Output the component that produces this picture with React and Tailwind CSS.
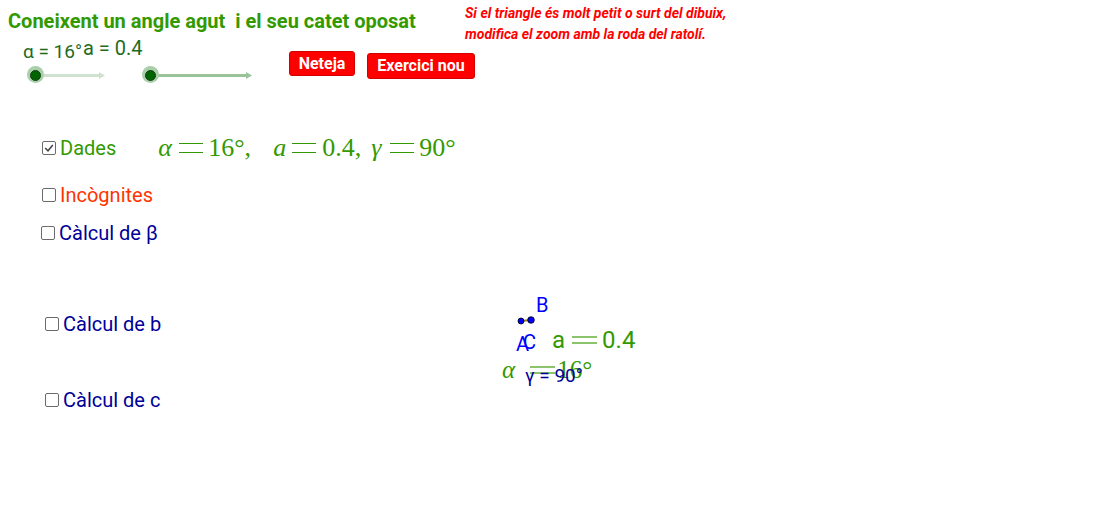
import React from "react";

const roboto = { fontFamily: "Roboto, 'Liberation Sans', sans-serif" };
const serif = { fontFamily: "'Liberation Serif', 'DejaVu Serif', serif" };

function Box({ checked }) {
  return (
    <span className="inline-flex items-center justify-center w-[14px] h-[14px] border border-[#6b6b6b] rounded-[2px] bg-white mr-[4px] shrink-0">
      {checked && (
        <svg width="12" height="12" viewBox="0 0 12 12">
          <path d="M2.2 6 L5 8.8 L9.8 3" fill="none" stroke="#444" strokeWidth="1.5" />
        </svg>
      )}
    </span>
  );
}

function Option({ checked, color, label, className = "" }) {
  return (
    <div className={`flex items-center text-[20px] leading-none ${color} ${className}`}>
      <Box checked={checked} />
      <span>{label}</span>
    </div>
  );
}

/* a typeset "=" sign drawn as two rules */
function Eq({ className = "" }) {
  return <span className={`inline-block w-[24px] h-[10px] border-y-[1.5px] border-current ${className}`} />;
}

function Slider({ w, light, className = "" }) {
  const line = light ? "bg-[#cfe2cf]" : "bg-[#99c499]";
  const fill = light ? "fill-[#cfe2cf]" : "fill-[#99c499]";
  return (
    <div className={`relative h-[12px] ${className}`} style={{ width: w }}>
      <div className={`absolute left-[4px] right-[2px] top-[5px] h-[3px] ${line}`} />
      <svg className="absolute right-[-2px] top-[3px]" width="6" height="7" viewBox="0 0 6 7">
        <path d="M0 0 L6 3.5 L0 7 Z" className={fill} />
      </svg>
      <div className="absolute left-[-8px] top-[-3px] w-[17px] h-[17px] rounded-full bg-[#a9cfa9]" />
      <div className="absolute left-[-5px] top-[1px] w-[11px] h-[11px] rounded-full bg-[#006400] border border-[#1a3d1a]" />
    </div>
  );
}

export default function App() {
  return (
    <div className="relative w-[1098px] h-[510px] bg-white overflow-hidden" style={roboto}>
      {/* header */}
      <div className="absolute left-[8px] top-[11px] text-[20px] font-bold text-[#339900] whitespace-pre leading-none">
        Coneixent un angle agut  i el seu catet oposat
      </div>

      <div className="absolute left-[465px] top-[3px] text-[14px] font-bold italic text-[#ff0000] leading-[21px]">
        <div>Si el triangle és molt petit o surt del dibuix,</div>
        <div>modifica el zoom amb la roda del ratolí.</div>
      </div>

      <div className="absolute left-[23px] top-[42px] text-[19px] text-[#1e6b1e] leading-none">α = 16°</div>
      <div className="absolute left-[83px] top-[38px] text-[20px] text-[#1e6b1e] leading-none">a = 0.4</div>

      <div className="absolute left-[35px] top-[69px] flex">
        <Slider w={68} light />
        <Slider w={100} className="ml-[47px]" />
      </div>

      <div className="absolute left-[289px] top-[51px] flex gap-[12px] items-start">
        <button className="w-[66px] h-[25px] bg-[#ff0000] border border-[#d40000] rounded-[3px] text-white font-bold text-[16px] leading-none">
          Neteja
        </button>
        <button className="mt-[2px] w-[108px] h-[26px] bg-[#ff0000] border border-[#d40000] rounded-[3px] text-white font-bold text-[16px] leading-none">
          Exercici nou
        </button>
      </div>

      {/* checkbox list */}
      <div className="absolute left-[41px] top-[135px] flex flex-col items-start">
        <div className="flex items-center">
          <Option checked color="text-[#339900]" label="Dades" className="ml-[1px]" />
          <div className="ml-[42px] flex items-center text-[26px] text-[#339900] leading-none whitespace-pre" style={serif}>
            <i className="w-[21px]">α</i>
            <Eq className="mr-[5px]" />
            <span className="w-[65px]">16°,</span>
            <i className="w-[19px]">a</i>
            <Eq className="mr-[6px]" />
            <span className="w-[49px]">0.4,</span>
            <i className="w-[19px]">γ</i>
            <Eq className="mr-[5px]" />
            <span>90°</span>
          </div>
        </div>
        <Option color="text-[#ff3300]" label="Incògnites" className="ml-[1px] mt-[24px]" />
        <Option color="text-[#000099]" label="Càlcul de β" className="mt-[18px]" />
        <Option color="text-[#000099]" label="Càlcul de b" className="ml-[4px] mt-[71px]" />
        <Option color="text-[#000099]" label="Càlcul de c" className="ml-[4px] mt-[56px]" />
      </div>

      {/* canvas figure */}
      <svg className="absolute left-[515px] top-[314px]" width="22" height="14" viewBox="0 0 22 14">
        <line x1="6" y1="7" x2="16" y2="6" stroke="#a08020" strokeWidth="2" />
        <circle cx="6" cy="7" r="3" fill="#0000ff" stroke="#000" strokeWidth="0.8" />
        <circle cx="16" cy="6" r="3.3" fill="#0000ff" stroke="#000" strokeWidth="0.8" />
      </svg>
      <div className="absolute left-[536px] top-[295px] text-[20px] text-[#0000ff] leading-none">B</div>
      <div className="absolute left-[516px] top-[334px] text-[20px] text-[#0000ff] leading-none">A</div>
      <div className="absolute left-[523px] top-[332px] text-[20px] text-[#0000ff] leading-none">C</div>

      <div className="absolute left-[552px] top-[328px] flex items-center text-[24px] text-[#339900] leading-none">
        <span>a</span>
        <span className="ml-[7px] mr-[5px] inline-block w-[25px] h-[8px] border-y-[2px] border-[#8cc46c]" />
        <span>0.4</span>
      </div>

      <div className="absolute left-[502px] top-[357px] flex items-center text-[25px] text-[#339900] leading-none" style={serif}>
        <i>α</i>
        <span className="ml-[15px] mr-[2px] inline-block w-[25px] h-[8px] border-y-[2px] border-[#8cc46c]" />
        <span>16°</span>
      </div>
      <div className="absolute left-[525px] top-[366px] text-[19px] text-[#000099] leading-none">γ = 90°</div>
    </div>
  );
}
